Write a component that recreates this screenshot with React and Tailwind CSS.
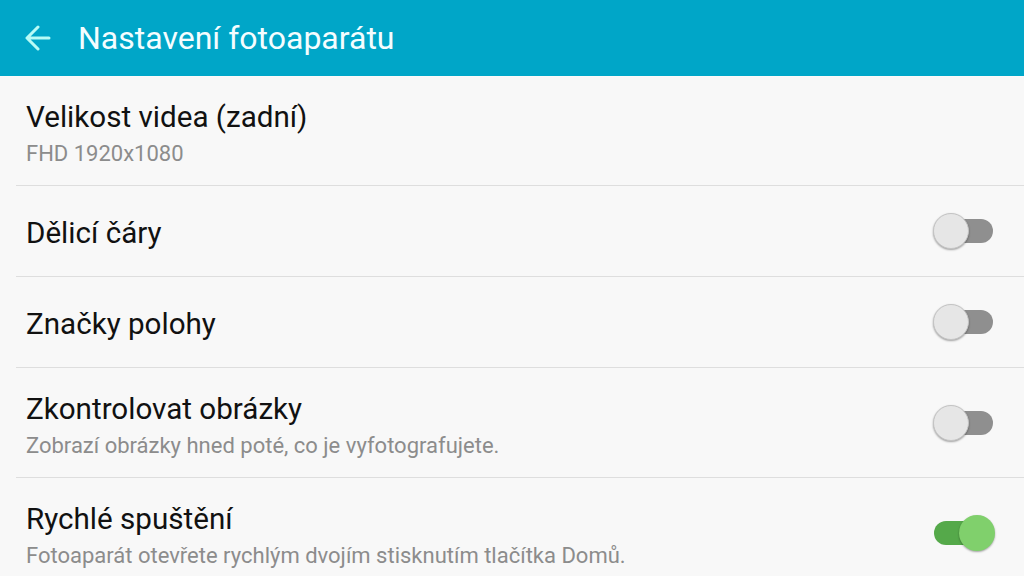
import { useState } from "react";

const settings = [
  { id: "video", title: "Velikost videa (zadní)", sub: "FHD 1920x1080", toggle: null },
  { id: "grid", title: "Dělicí čáry", toggle: false },
  { id: "location", title: "Značky polohy", toggle: false },
  { id: "review", title: "Zkontrolovat obrázky", sub: "Zobrazí obrázky hned poté, co je vyfotografujete.", toggle: false },
  { id: "quick", title: "Rychlé spuštění", sub: "Fotoaparát otevřete rychlým dvojím stisknutím tlačítka Domů.", toggle: true },
];

const Switch = ({ on, onChange }) => (
  <button
    type="button"
    onClick={onChange}
    className="relative h-[38px] w-[62px] shrink-0"
  >
    <span
      className={`absolute left-[1px] right-[2px] top-[7px] h-[24px] rounded-full ${
        on ? "bg-[#55a94a]" : "bg-[#8f8f8f]"
      }`}
    />
    <span
      className={`absolute top-[1px] h-[36px] w-[36px] rounded-full shadow-[0_1px_2px_rgba(0,0,0,0.35)] ${
        on ? "right-0 bg-[#80d06c]" : "left-0 border border-[#c4c4c4] bg-[#e6e6e6]"
      }`}
    />
  </button>
);

const App = () => {
  const [values, setValues] = useState(
    Object.fromEntries(settings.map((s) => [s.id, s.toggle]))
  );

  return (
    <div className="flex h-[576px] w-full flex-col overflow-hidden bg-[#f8f8f8] font-['Roboto',sans-serif]">
      {/* top bar */}
      <div className="flex h-[76px] shrink-0 items-center bg-[#00a6c8] shadow-[0_1px_0_rgba(255,255,255,0.35)]">
        <svg
          className="ml-[25px] h-[26px] w-[26px]"
          viewBox="0 0 26 26"
          fill="none"
          stroke="#b8fbf6"
          strokeWidth="3"
          strokeLinecap="round"
          strokeLinejoin="round"
        >
          <path d="M24 13H3M13 2L2 13l11 11" />
        </svg>
        <h1 className="ml-[27px] text-[32px] leading-none text-[#f4fdff]">Nastavení fotoaparátu</h1>
      </div>

      {/* settings list */}
      <div className="flex flex-col">
        {settings.map((s, i) => (
          <div key={s.id}>
            {i > 0 && <div className="ml-4 h-px bg-[#dedede]" />}
            <div
              className={`flex items-center pl-[26px] pr-[29px] ${
                s.sub ? "h-[109px]" : "h-[90px]"
              }`}
            >
              <div className="flex-1 pt-[3px]">
                <div className="text-[29.6px] leading-[36px] text-[#111]">{s.title}</div>
                {s.sub && (
                  <div className="mt-[7px] text-[22px] leading-[24px] text-[#8c8c8c]">{s.sub}</div>
                )}
              </div>
              {s.toggle !== null && (
                <Switch
                  on={values[s.id]}
                  onChange={() => setValues({ ...values, [s.id]: !values[s.id] })}
                />
              )}
            </div>
          </div>
        ))}
      </div>
    </div>
  );
};

export default App;
